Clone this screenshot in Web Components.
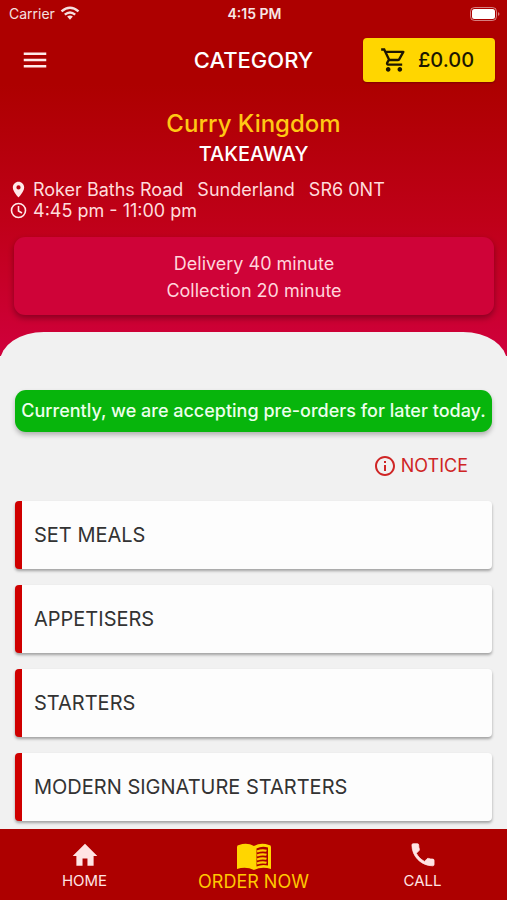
<!DOCTYPE html>
<html lang="en">
<head>
<meta charset="utf-8">
<meta name="viewport" content="width=device-width, initial-scale=1">
<title>Curry Kingdom</title>
<style>
  html { height: 100%; }
  body {
    margin: 0;
    height: 100%;
    font-family: Inter, "Liberation Sans", sans-serif;
    color: #333;
    background: #f1f1f1;
  }
</style>
</head>
<body>
<order-app></order-app>

<script>
const define = (name, html) => {
  const template = document.createElement('template');
  template.innerHTML = html;
  customElements.define(name, class extends HTMLElement {
    constructor() {
      super();
      this.attachShadow({ mode: 'open' }).append(template.content.cloneNode(true));
    }
  });
};

define('status-bar', `
<style>
  :host { display: grid; grid-template-columns: 1fr auto 1fr; align-items: center; height: 27px; padding: 0 7px 0 9px; color: #fff; }
  .carrier { display: flex; align-items: center; gap: 5px; font: 14px/20px Inter, sans-serif; opacity: .88; }
  .time { font: 600 14px/20px Inter, sans-serif; opacity: .9; }
  .battery { justify-self: end; }
  svg { display: block; }
</style>
<div class="carrier"><span>Carrier</span>
  <svg width="20" height="15" viewBox="0 0 20 15" fill="none" stroke="#fff" stroke-width="2.4" aria-hidden="true"><path d="M1.5 5.3Q10-2 18.5 5.3M4.8 8.6Q10 4.2 15.2 8.6"/><path d="M7.1 10.6Q10 8.4 12.9 10.6L10 13.8Z" fill="#fff" stroke="none"/></svg>
</div>
<span class="time">4:15 PM</span>
<svg class="battery" width="30" height="14" viewBox="0 0 30 14" aria-hidden="true"><rect x=".5" y=".5" width="26" height="13" rx="4" fill="none" stroke="#fff" stroke-opacity=".5"/><rect x="2" y="2" width="23" height="10" rx="2.5" fill="#fff"/><path d="M28 5v4q3-2 0-4" fill="#fff" opacity=".5"/></svg>
`);

define('basket-button', `
<style>
  :host { display: block; }
  button { display: flex; align-items: center; justify-content: center; gap: 10px; width: 132px; height: 44px; border: 0; border-radius: 4px; padding: 0 4px 0 0; background: #ffd600; color: #1c1600; font: 500 20px/24px Inter, sans-serif; box-shadow: 0 1px 2px #0004; }
</style>
<button type="button" aria-label="Basket">
  <svg width="28" height="28" viewBox="0 0 24 24" fill="currentColor" aria-hidden="true"><path d="M15.55 13c.75 0 1.41-.41 1.75-1.03l3.58-6.49A.996.996 0 0 0 20.01 4H5.21l-.94-2H1v2h2l3.6 7.59-1.35 2.44C4.52 15.37 5.48 17 7 17h12v-2H7l1.1-2h7.45zM6.16 6h12.15l-2.76 5H8.53L6.16 6zM7 18c-1.1 0-1.99.9-1.99 2S5.9 22 7 22s2-.9 2-2-.9-2-2-2zm10 0c-1.1 0-1.99.9-1.99 2s.89 2 1.99 2 2-.9 2-2-.9-2-2-2z"/></svg>
  <span><slot></slot></span>
</button>
`);

define('app-bar', `
<style>
  :host { display: grid; grid-template-columns: 1fr auto 1fr; align-items: center; height: 65px; padding: 0 12px; color: #fff; }
  .menu { justify-self: start; display: flex; border: 0; padding: 8px; background: none; color: #ffe9e9; }
  h1 { margin: 0; font: 500 22px/26px Inter, sans-serif; }
  basket-button { justify-self: end; }
</style>
<button class="menu" type="button" aria-label="Menu"><svg width="30" height="30" viewBox="0 0 24 24" fill="currentColor" aria-hidden="true"><path d="M3 18h18v-2H3v2zm0-5h18v-2H3v2zm0-7v2h18V6H3z"/></svg></button>
<h1><slot></slot></h1>
<basket-button>£0.00</basket-button>
`);

define('delivery-card', `
<style>
  :host { display: block; margin: 16px 13px 0 14px; padding: 13px 0 11px; border-radius: 11px; background: #cf0338; color: #ffd5dc; text-align: center; font: 18px/27px Inter, sans-serif; box-shadow: 0 3px 6px #0005; }
  p { margin: 0; }
</style>
<p>Delivery 40 minute</p><p>Collection 20 minute</p>
`);

define('shop-header', `
<style>
  :host { display: block; padding-bottom: 41px; background: linear-gradient(#ad0000 0, #ad0000 84px, #bf0018 220px, #d0003c 100%); color: #ffdcdc; }
  h2 { margin: 17px 0 0; text-align: center; font: 500 24px/30px Inter, sans-serif; color: #ffc814; }
  .kind { margin: 0; padding: 3px 0 1px; text-align: center; font: 500 20px/24px Inter, sans-serif; color: #fff; }
  .facts { margin: 12px 10px 0; font: 18px/21px Inter, sans-serif; }
  .row { display: flex; align-items: center; gap: 6px; }
  .address { display: flex; gap: 14px; }
  svg { flex: none; color: #ffe9e9; }
</style>
<status-bar></status-bar>
<app-bar>CATEGORY</app-bar>
<h2>Curry Kingdom</h2>
<p class="kind">TAKEAWAY</p>
<div class="facts">
  <div class="row"><svg width="17" height="17" viewBox="0 0 24 24" fill="currentColor" aria-hidden="true"><path d="M12 1C7.6 1 4 4.6 4 9c0 6 8 14 8 14s8-8 8-14c0-4.4-3.6-8-8-8zm0 11a3 3 0 1 1 0-6 3 3 0 0 1 0 6z"/></svg>
    <span class="address"><span>Roker Baths Road</span><span>Sunderland</span><span>SR6 0NT</span></span></div>
  <div class="row"><svg width="17" height="17" viewBox="0 0 17 17" fill="none" stroke="currentColor" stroke-width="1.6" aria-hidden="true"><circle cx="8.5" cy="8.5" r="7"/><path d="M8.5 4v5l3.5 2"/></svg>
    <span>4:45 pm - 11:00 pm</span></div>
</div>
<delivery-card></delivery-card>
`);

define('notice-link', `
<style>
  :host { display: flex; justify-content: flex-end; }
  a { display: flex; align-items: center; gap: 6px; color: #cf2525; text-decoration: none; font: 18px/22px Inter, sans-serif; }
</style>
<a href="#notice"><svg width="20" height="20" viewBox="2 2 20 20" fill="currentColor" aria-hidden="true"><path d="M11 7h2v2h-2zm0 4h2v6h-2zm1-9C6.48 2 2 6.48 2 12s4.48 10 10 10 10-4.48 10-10S17.52 2 12 2zm0 18c-4.41 0-8-3.59-8-8s3.59-8 8-8 8 3.59 8 8-3.59 8-8 8z"/></svg><span><slot></slot></span></a>
`);

define('menu-category', `
<style>
  :host { display: block; }
  a { display: flex; align-items: center; height: 68px; box-sizing: border-box; border-left: 7px solid #cf0000; border-radius: 4px; padding-left: 12px; background: #fdfdfd; color: #333; text-decoration: none; font: 20px/24px Inter, sans-serif; box-shadow: 0 2px 3px #0005; }
</style>
<a href="#category"><slot></slot></a>
`);

define('nav-item', `
<style>
  :host { display: block; color: #ffe4e4; font: 15px/18px Inter, sans-serif; }
  :host([active]) { color: #ffc800; font: 18px/20px Inter, sans-serif; }
  a { display: flex; flex-direction: column; align-items: center; color: inherit; text-decoration: none; }
  ::slotted(svg) { display: block; }
</style>
<a href="#page"><slot name="icon"></slot><span><slot></slot></span></a>
`);

define('bottom-nav', `
<style>
  :host { display: block; background: #ad0000; }
  nav { display: grid; grid-template-columns: repeat(3, 1fr); padding: 11px 0 8px; }
  svg { fill: currentColor; }
</style>
<nav>
  <nav-item><svg slot="icon" width="30" height="32" viewBox="0 0 24 26" aria-hidden="true"><path d="M10 21v-6h4v6h5v-8h3L12 3 2 13h3v8z"/></svg>HOME</nav-item>
  <nav-item active><svg slot="icon" width="36" height="32" viewBox="0 0 36 32" aria-hidden="true"><path d="M1 7Q1 5 3 5Q11 2 18 6V30Q10 26 1 29Z" fill="#ffd600"/><path d="M18 6Q25 2 33 5Q35 5 35 7V29Q26 26 18 30Z" fill="#ffd600"/><path d="M20.5 8.5Q26 5.5 32 7.5V25.5Q26 24 20.500 26.5Z" fill="#ad0000"/><path d="M21 11.5q5-2 9.500-.7M21 15.500q5-2 9.500-.7M21 19.500q5-2 9.500-.7M21 23.500q5-2 9.500-.7" fill="none" stroke="#ffc800" stroke-width="2.200"/></svg>ORDER NOW</nav-item>
  <nav-item><svg slot="icon" width="30" height="32" viewBox="0 0 24 26" aria-hidden="true"><path d="M6.62 10.79c1.44 2.83 3.76 5.14 6.59 6.59l2.2-2.2c.27-.27.67-.36 1.02-.24 1.12.37 2.33.57 3.57.57.55 0 1 .45 1 1V20c0 .55-.45 1-1 1C10.610 21 3 13.390 3 4c0-.55.45-1 1-1h3.500c.55 0 1 .45 1 1 0 1.250.2 2.450.57 3.570.11.35.03.74-.25 1.020l-2.200 2.200z" stroke="currentColor" stroke-width=".6"/></svg>CALL</nav-item>
</nav>
`);

define('order-app', `
<style>
  :host { display: flex; flex-direction: column; height: 100%; }
  .page { flex: 1; min-height: 0; overflow: hidden; }
  main { margin-top: -24px; padding: 58px 15px 16px; background: #f1f1f1; border-radius: 44px 44px 0 0 / 30px 30px 0 0; }
  .alert { margin: 0; padding: 10px 0; border-radius: 11px; background: #07b50c; color: #edffed; text-align: center; font: 500 18px/22px Inter, sans-serif; box-shadow: 0 3px 5px #0004; }
  notice-link { margin: 23px 24px 0 0; }
  .list { display: grid; gap: 16px; margin-top: 24px; }
</style>
<div class="page">
  <shop-header></shop-header>
  <main>
    <p class="alert" role="status">Currently, we are accepting pre-orders for later today.</p>
    <notice-link>NOTICE</notice-link>
    <div class="list">
      <menu-category>SET MEALS</menu-category>
      <menu-category>APPETISERS</menu-category>
      <menu-category>STARTERS</menu-category>
      <menu-category>MODERN SIGNATURE STARTERS</menu-category>
    </div>
  </main>
</div>
<bottom-nav></bottom-nav>
`);
</script>
</body>
</html>
